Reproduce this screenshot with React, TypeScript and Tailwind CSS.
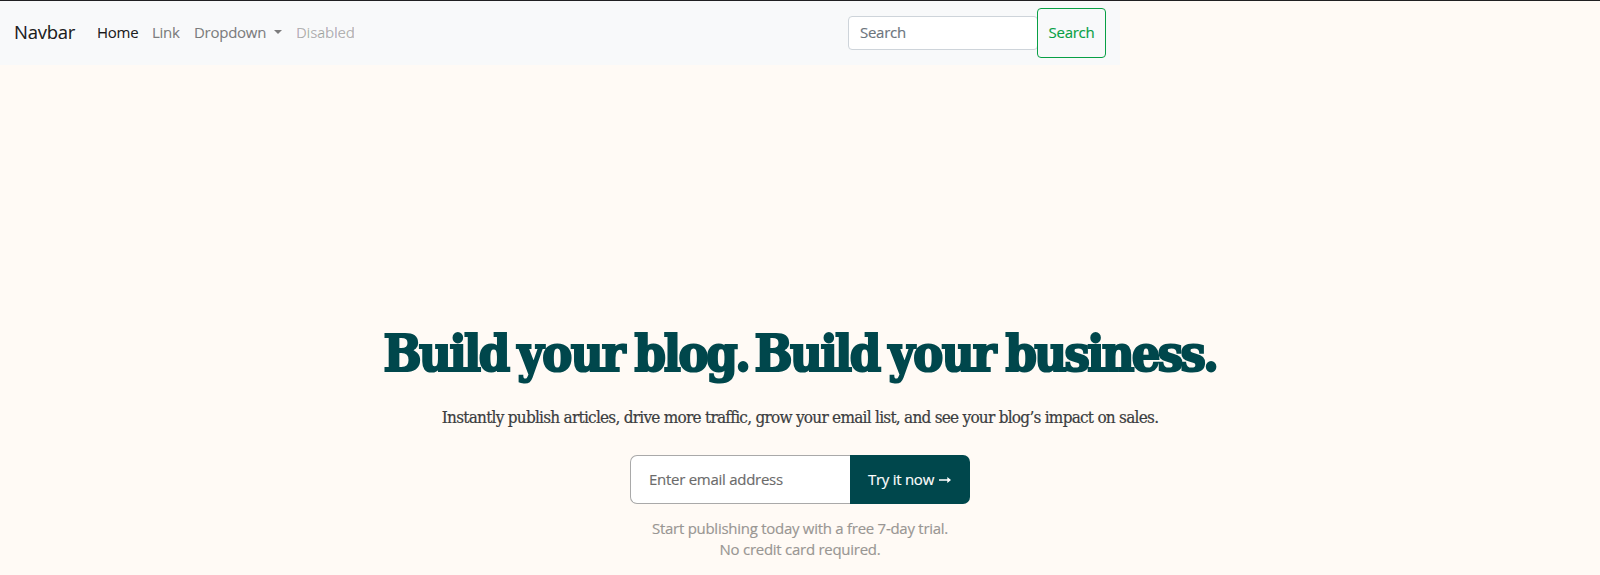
const sans = "font-['Open_Sans',sans-serif] tracking-[-0.27px]";
const slab = "font-['DejaVu_Serif_Condensed','DejaVu_Serif',serif]";

function Navbar() {
  return (
    <nav className="flex h-16 w-[1120px] items-center bg-[#f8f9fa] px-[14px] pb-px text-[15px]">
      <a className="w-[83px] pb-px text-[18.5px] text-black/90">Navbar</a>
      <ul className="flex items-center whitespace-nowrap pb-px text-black/50">
        <li className="w-[55px] font-medium text-black/90">Home</li>
        <li className="w-[42px]">Link</li>
        <li className="flex w-[102px] items-center">
          Dropdown
          <span className="ml-2 border-x-[4.5px] border-t-[4.5px] border-x-transparent border-t-black/50" />
        </li>
        <li className="text-black/30">Disabled</li>
      </ul>
      <form className="ml-auto flex items-center pt-px">
        <input
          placeholder="Search"
          className="h-[34px] w-[190px] rounded border border-[#ced4da] bg-white px-[11px] pb-[2px] placeholder:text-[#6c757d]"
        />
        <button
          type="button"
          className="-ml-px h-[50px] w-[69px] rounded border border-[#08a045] pb-[2px] font-medium text-[#08a045]"
        >
          Search
        </button>
      </form>
    </nav>
  );
}

function Hero() {
  return (
    <main className="flex flex-col items-center pt-[252px] text-center">
      <h1
        className={`${slab} flex h-[76px] whitespace-pre text-left text-[50px] font-bold leading-[74px] text-[#00474c] [-webkit-text-stroke:2.2px_#00474c]`}
      >
        <span className="w-[134px] tracking-[-2.4px]">Build </span>
        <span className="w-[117px] tracking-[-1.5px]">your </span>
        <span className="w-[120px] tracking-[-2.3px]">blog. </span>
        <span className="w-[134px] tracking-[-2.4px]">Build </span>
        <span className="w-[117px] tracking-[-1.5px]">your </span>
        <span className="w-[211px] tracking-[-2.6px]">business.</span>
      </h1>
      <p
        className={`${slab} mt-[12px] h-6 whitespace-nowrap text-[17px] leading-6 tracking-[-0.74px] text-[#3b3d40] [-webkit-text-stroke:0.2px_#3b3d40]`}
      >
        Instantly publish articles, drive more traffic, grow your email list, and see your blog’s impact on sales.
      </p>
      <form className="mt-[26px] flex h-[49px] w-[340px] text-[15px]">
        <input
          placeholder="Enter email address"
          className="w-[220px] rounded-l-[7px] border border-r-0 border-[#a9a9a9] bg-white px-[18px] placeholder:text-[#6b6b6b]"
        />
        <button
          type="button"
          className="flex w-[120px] items-center justify-center gap-[5px] rounded-r-[7px] bg-[#00474c] pr-px font-medium text-white"
        >
          Try it now
          <svg width="12" height="8" viewBox="0 0 12 8" fill="currentColor">
            <path d="M0 3.3h8.3V1L12 4 8.3 7V4.7H0z" />
          </svg>
        </button>
      </form>
      <p className="mt-[14px] text-[15px] leading-[21px] text-[#999693]">
        Start publishing today with a free 7-day trial.
        <br />
        No credit card required.
      </p>
    </main>
  );
}

export default function App() {
  return (
    <div className={`${sans} h-[575px] w-[1600px] overflow-hidden border-t border-[#202022] bg-[#fffaf5] [-webkit-text-stroke-width:0.15px]`}>
      <Navbar />
      <Hero />
    </div>
  );
}
